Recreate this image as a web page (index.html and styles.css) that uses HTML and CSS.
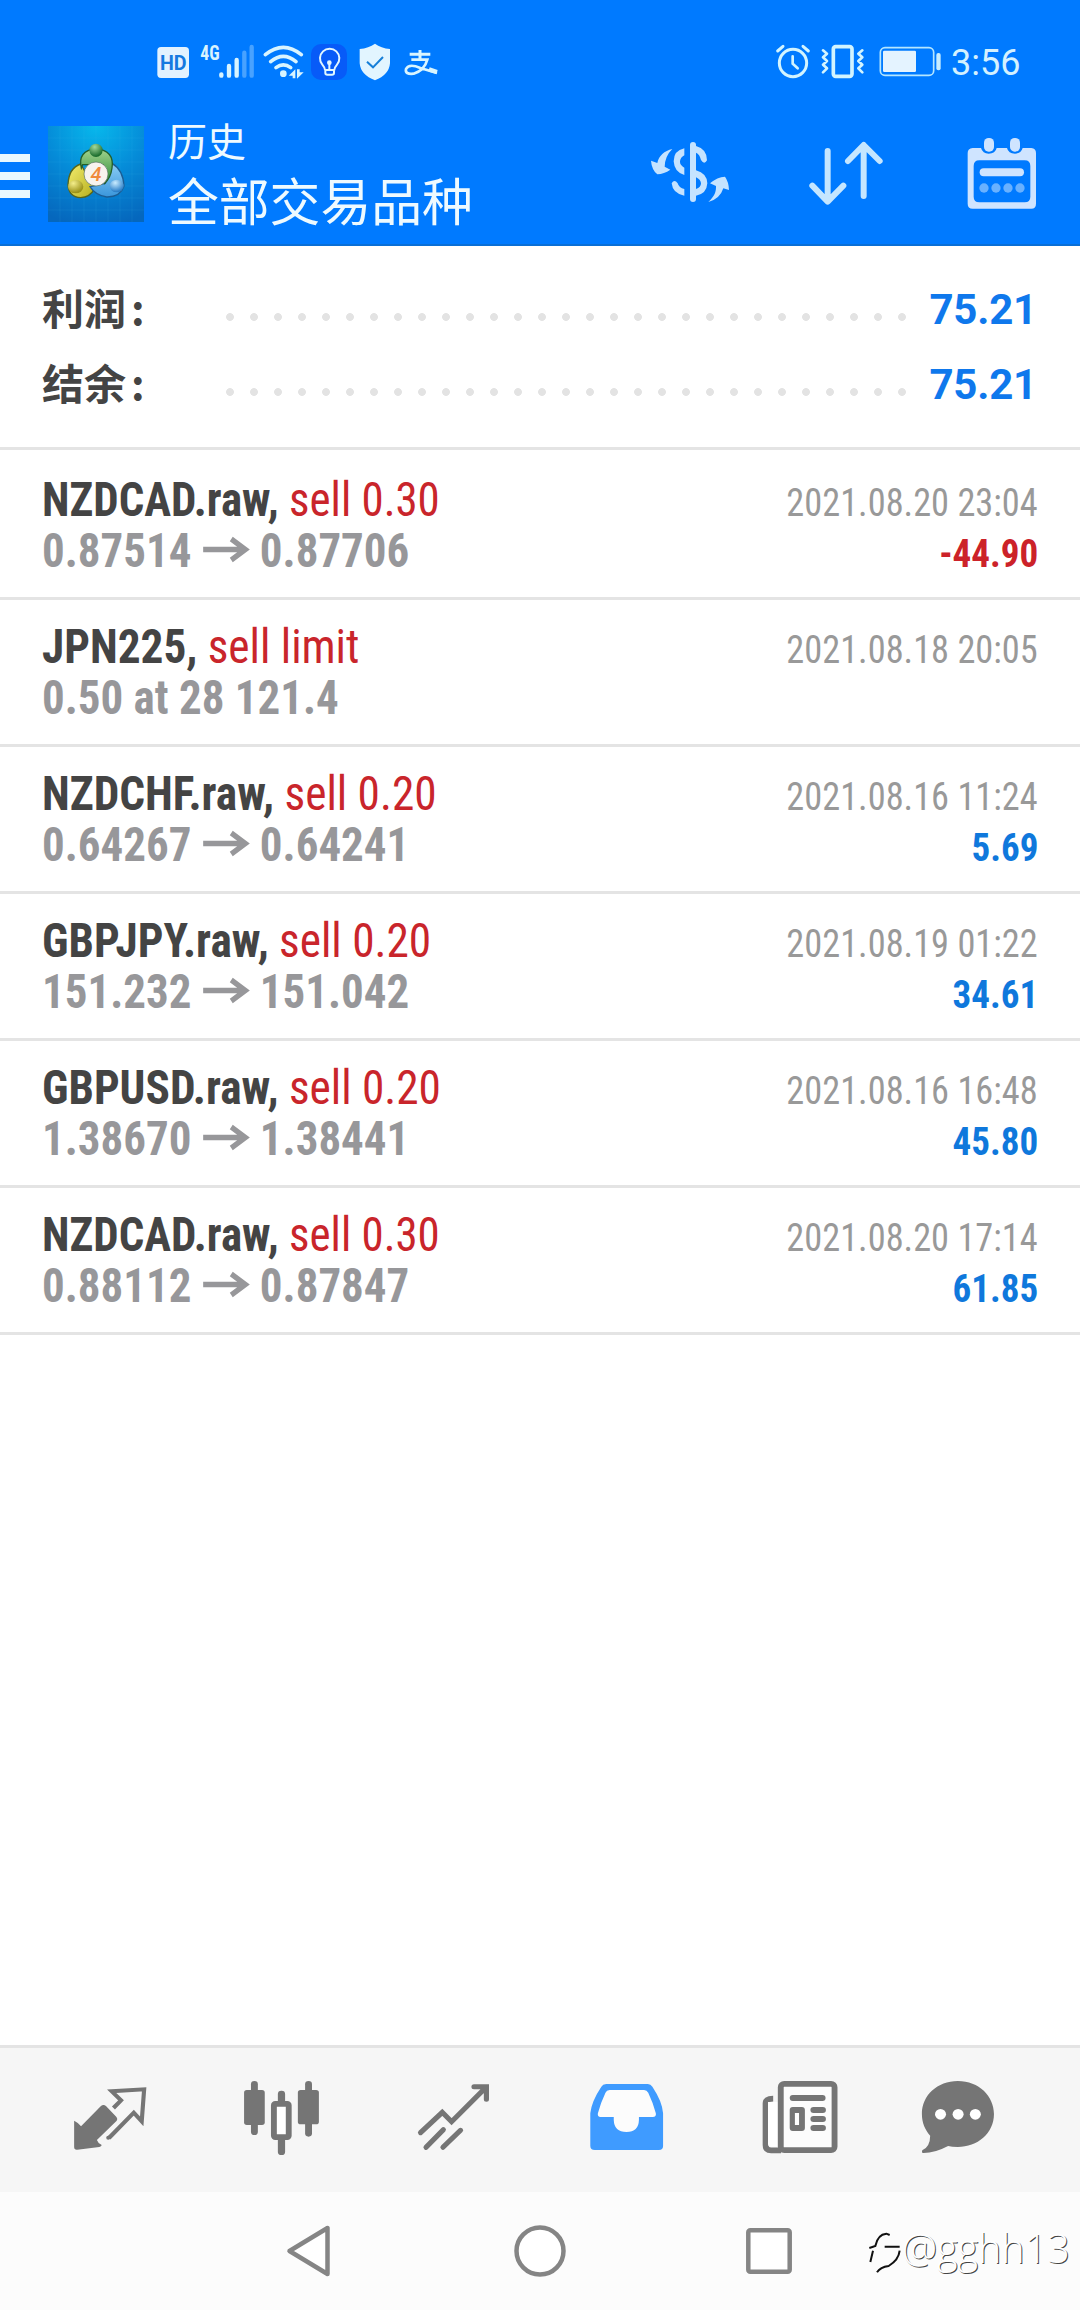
FILE: index.html
```html
<!DOCTYPE html>
<html lang="zh-CN">
<head>
<meta charset="utf-8">
<title>历史</title>
<link rel="stylesheet" href="styles.css">
</head>
<body>
<div class="screen">
  <header class="top">
    <div class="status">
      <svg class="hd" width="33" height="44" viewBox="52 30 99 132"><rect x="53" y="51" width="95" height="93" rx="11" fill="#e2f2ff"/><text x="101" y="119" class="hd-text" text-anchor="middle" textLength="80" lengthAdjust="spacingAndGlyphs">HD</text></svg>
      <svg class="signal" width="55" height="44" viewBox="180 30 165 132"><text x="181" y="90" class="net-text" textLength="58" lengthAdjust="spacingAndGlyphs">4G</text><g stroke-width="13" stroke-linecap="round" stroke="#d8f4ff"><path d="M244 133v4M267 108v29M290 90v47"/><path d="M313 68v69M335 51v86" stroke="#48a2ff"/></g></svg>
      <svg class="wifi" width="41" height="44" viewBox="369 30 123 132"><g fill="none" stroke="#d8f4ff" stroke-width="11" stroke-linecap="round"><path d="M376 74Q430 30 484 74M392 95Q430 63 468 95M408 113Q430 96 452 113"/></g><circle cx="430" cy="131" r="10" fill="#d8f4ff"/><path d="M466 118v27h-8v-8h-12zM471 118h8v9h12l-20 19z" fill="#d8f4ff"/></svg>
      <svg class="bulb" width="36" height="44" viewBox="513 30 108 132"><rect x="513" y="42" width="108" height="108" rx="30" fill="#075bf8"/><g fill="none" stroke="#e2f7ff" stroke-width="6" stroke-linecap="round" stroke-linejoin="round"><path d="M555 120Q554 112 547 104A29 29 0 1 1 591 104Q584 112 583 120ZM556 123v6q0 5 6 5h14q6 0 6-5v-6M568 102v16"/></g><circle cx="568" cy="98" r="7" fill="#e2f7ff"/></svg>
      <svg class="shield" width="32" height="44" viewBox="656 30 96 132"><path d="M704 41Q722 54 749 57V100Q746 135 704 151Q661 135 658 100V57Q685 54 704 41Z" fill="#e2f5ff"/><path d="M680 95l18 17 30-31" fill="none" stroke="#167fd8" stroke-width="6"/></svg>
      <svg class="pay" width="34" height="44" viewBox="791 30 102 132"><g fill="none" stroke="#d8f5ff"><path d="M808 73h62M839 60v28" stroke-width="9"/><path d="M813 89h48Q852 122 820 131Q793 134 797 117Q806 99 840 114L890 129" stroke-width="8"/><path d="M866 118l24 8" stroke-width="13"/></g></svg>
      <svg class="alarm" width="36" height="44" viewBox="50 30 108 132"><g fill="none" stroke="#d2f4ff" stroke-linecap="round"><circle cx="101" cy="99" r="41" stroke-width="9"/><path d="M55 63l16-14M147 63l-16-14" stroke-width="9"/><path d="M100 79v22l15 14" stroke-width="8"/></g></svg>
      <svg class="vibrate" width="44" height="44" viewBox="184 30 132 132"><g fill="none" stroke="#d2f4ff" stroke-linejoin="round" stroke-linecap="round"><rect x="221" y="50" width="56" height="89" rx="7" stroke-width="11"/><path d="M190 61l12 10-12 11 12 11-12 11 12 11-12 12M308 61l-12 10 12 11-12 11 12 11-12 11 12 12" stroke-width="8"/></g></svg>
      <svg class="battery" width="63" height="44" viewBox="357 30 189 132"><rect x="361" y="53" width="160" height="83" rx="14" fill="none" stroke="#b4e6ff" stroke-width="5"/><rect x="369" y="62" width="99" height="64" rx="4" fill="#e4f3ff"/><rect x="529" y="69" width="13" height="52" rx="6" fill="#c8edff"/></svg>
      <span class="time">3:56</span>
    </div>
    <div class="appbar">
      <div class="menu"><i></i><i></i><i></i></div>
      <svg class="logo" width="96" height="96" viewBox="24 24 288 288">
        <defs>
          <radialGradient id="bg" cx=".5" cy="0" r="1.05"><stop offset="0" stop-color="#07b8ec"/><stop offset=".5" stop-color="#058bd8"/><stop offset="1" stop-color="#0567bd"/></radialGradient>
          <linearGradient id="gr" x2="0" y2="1"><stop stop-color="#a5d48e"/><stop offset="1" stop-color="#278a38"/></linearGradient>
          <linearGradient id="ye" x2="1" y2="1"><stop stop-color="#f4ee70"/><stop offset="1" stop-color="#b5ad1c"/></linearGradient>
          <linearGradient id="bl" x2="0" y2="1"><stop stop-color="#8bcdf6"/><stop offset="1" stop-color="#3a96db"/></linearGradient>
          <radialGradient id="hg" cx=".4" cy=".25" r=".7"><stop stop-color="#a5d99b"/><stop offset="1" stop-color="#1b6d2d"/></radialGradient>
          <radialGradient id="hy" cx=".35" cy=".25" r=".7"><stop stop-color="#f4ee8b"/><stop offset="1" stop-color="#9d941a"/></radialGradient>
          <radialGradient id="hb" cx=".4" cy=".25" r=".7"><stop stop-color="#c9ecff"/><stop offset="1" stop-color="#2b7fc8"/></radialGradient>
        </defs>
        <path fill="url(#bg)" d="M24 24h288v288H24z"/>
        <path d="M60 24v288M96 24v288M132 24v288M168 24v288M204 24v288M240 24v288M276 24v288M24 60h288M24 96h288M24 132h288M24 168h288M24 204h288M24 240h288M24 276h288" stroke="#4fc0f0" stroke-opacity=".18" stroke-width="2"/>
        <path d="M84 200Q86 150 122 138L164 212Q150 238 122 239Q86 236 84 200Z" fill="url(#ye)" stroke="#56651c" stroke-width="4"/>
        <path d="M216 136Q250 156 252 205Q240 238 200 237Q166 232 150 206L196 196Z" fill="url(#bl)" stroke="#1b5d94" stroke-width="4"/>
        <path d="M124 150Q112 98 168 92Q224 98 216 150Q212 180 194 196L190 140H128Z" fill="url(#gr)" stroke="#245f2b" stroke-width="4"/>
        <circle cx="168" cy="97" r="20" fill="url(#hg)"/><ellipse cx="107" cy="206" rx="23" ry="20" fill="url(#hy)"/><ellipse cx="230" cy="204" rx="21" ry="19" fill="url(#hb)"/>
        <circle cx="168" cy="168" r="36" fill="#f7f3ee" stroke="#55705c" stroke-width="2"/>
        <text x="168" y="189" class="logo-text" text-anchor="middle">4</text>
      </svg>
      <div class="titles"><div class="title">历史</div><div class="subtitle">全部交易品种</div></div>
      <svg class="deals" width="80" height="70" viewBox="60 45 240 210" fill="#c5e3ff"><path d="M127 87C103 92 86 108 82 129L63 122Q65 149 82 163Q102 162 121 149L104 140Q105 108 127 87ZM235 246C258 225 258 210 258 198L240 190Q262 171 285 170Q296 185 297 210L280 205Q270 237 235 246Z"/><rect x="180" y="66" width="18" height="180" rx="9"/><path d="M163 85Q131 92 131 124Q133 157 163 165V143Q149 136 150 124Q151 112 163 106ZM198 78Q231 87 231 121Q223 136 213 120Q209 102 198 98ZM125 190Q133 176 143 190Q147 204 163 207V227Q128 221 125 190ZM198 151Q231 160 232 190Q230 222 198 227V207Q213 202 213 190Q212 178 198 172Z"/></svg>
      <svg class="sort" width="76" height="70" viewBox="535 45 228 210" fill="none" stroke="#c5e6ff" stroke-width="18" stroke-linecap="round" stroke-linejoin="round"><path d="M594 93V244M548 197L594 245L641 197M702 228V76M655 123L702 75L750 123"/></svg>
      <svg class="calendar" width="70" height="72" viewBox="1011 50 210 216"><path fill="#cfe4ff" fill-rule="evenodd" d="M1028 83H1053Q1058 100 1076 100Q1096 100 1100 83H1131Q1135 100 1155 100Q1173 100 1178 83H1204Q1218 84 1218 98V250Q1218 265 1204 265H1028Q1013 265 1013 250V98Q1013 84 1028 83ZM1048 120Q1031 120 1031 137V229Q1031 246 1048 246H1184Q1201 246 1201 229V137Q1201 120 1184 120Z"/><g fill="#cfe4ff"><rect x="1062" y="53" width="30" height="41" rx="14"/><rect x="1140" y="53" width="30" height="41" rx="14"/><rect x="1049" y="144" width="133" height="24" rx="12"/></g><g fill="#69b1ff"><circle cx="1062" cy="203" r="14"/><circle cx="1098" cy="203" r="14"/><circle cx="1134" cy="203" r="14"/><circle cx="1170" cy="203" r="14"/></g></svg>
    </div>
  </header>

  <section class="summary">
    <div class="sum-row"><span class="sum-label">利润<i class="colon">:</i></span><span class="dots"></span><span class="sum-value">75.21</span></div>
    <div class="sum-row"><span class="sum-label">结余<i class="colon">:</i></span><span class="dots"></span><span class="sum-value">75.21</span></div>
  </section>

  <main class="deals-list">
    <div class="deal first"><div class="line"><span class="name tight"><b>NZDCAD.raw,</b> <em>sell 0.30</em></span><span class="date">2021.08.20 23:04</span></div><div class="line"><span class="price">0.87514<svg class="arrow" viewBox="0 0 49 26"><path d="M0 12.500H45M30 2L45 12.500L30 23"/></svg>0.87706</span><span class="result loss">-44.90</span></div></div>
    <div class="deal"><div class="line"><span class="name"><b>JPN225,</b> <em>sell limit</em></span><span class="date">2021.08.18 20:05</span></div><div class="line"><span class="price">0.50 at 28 121.4</span></div></div>
    <div class="deal"><div class="line"><span class="name"><b>NZDCHF.raw,</b> <em>sell 0.20</em></span><span class="date">2021.08.16 11:24</span></div><div class="line"><span class="price">0.64267<svg class="arrow" viewBox="0 0 49 26"><path d="M0 12.500H45M30 2L45 12.500L30 23"/></svg>0.64241</span><span class="result">5.69</span></div></div>
    <div class="deal"><div class="line"><span class="name"><b>GBPJPY.raw,</b> <em>sell 0.20</em></span><span class="date">2021.08.19 01:22</span></div><div class="line"><span class="price">151.232<svg class="arrow" viewBox="0 0 49 26"><path d="M0 12.500H45M30 2L45 12.500L30 23"/></svg>151.042</span><span class="result">34.61</span></div></div>
    <div class="deal"><div class="line"><span class="name"><b>GBPUSD.raw,</b> <em>sell 0.20</em></span><span class="date">2021.08.16 16:48</span></div><div class="line"><span class="price">1.38670<svg class="arrow" viewBox="0 0 49 26"><path d="M0 12.500H45M30 2L45 12.500L30 23"/></svg>1.38441</span><span class="result">45.80</span></div></div>
    <div class="deal"><div class="line"><span class="name tight"><b>NZDCAD.raw,</b> <em>sell 0.30</em></span><span class="date">2021.08.20 17:14</span></div><div class="line"><span class="price">0.88112<svg class="arrow" viewBox="0 0 49 26"><path d="M0 12.500H45M30 2L45 12.500L30 23"/></svg>0.87847</span><span class="result">61.85</span></div></div>
  </main>

  <nav class="tabs">
    <svg class="tab" preserveAspectRatio="none" viewBox="203 150 232 228"><path fill="#757575" d="M215 272Q226 277 235 289L292 229Q300 221 308 229L337 260Q343 267 337 274L281 330Q284 340 295 345Q294 350 288 351L224 359Q215 360 215 351Z"/><path d="M329 234L351 211L324 184L418 178L411 274L388 248L316 324" fill="none" stroke="#757575" stroke-width="12"/><circle cx="314" cy="323" r="6" fill="#757575"/></svg>
    <svg class="tab" preserveAspectRatio="none" viewBox="703 150 232 228" fill="#757575"><rect x="729" y="153" width="20" height="162" rx="10"/><rect x="709" y="180" width="60" height="105" rx="8"/><rect x="886" y="153" width="20" height="167" rx="10"/><rect x="865" y="180" width="61" height="103" rx="8"/><rect x="807" y="182" width="21" height="60" rx="10"/><rect x="807" y="310" width="21" height="65" rx="10"/><rect x="795.500" y="221.500" width="43" height="100" rx="4" fill="#fff" stroke="#757575" stroke-width="17"/></svg>
    <svg class="tab" preserveAspectRatio="none" viewBox="1202 150 232 228" fill="none" stroke="#757575" stroke-width="15" stroke-linecap="round"><path d="M1221 308L1284 247L1311 275L1411 172M1376 170H1412V208M1237 352L1287 299M1286 352L1337 301" /></svg>
    <svg class="tab" preserveAspectRatio="none" viewBox="133.500 150 232 228"><path fill="#3f9bff" d="M192 162H313Q321 162 326 170Q355 215 357 250V348Q357 360 345 360H159Q146 360 146 348V250Q149 215 178 170Q182 162 192 162Z"/><path fill="#fcfcfc" d="M202 180H302Q310 180 314 188Q328 218 336 250Q338 261 327 261H287V270Q286 306 251 306Q215 306 214 270V261H176Q166 261 168 250Q176 218 190 188Q193 180 202 180Z"/></svg>
    <svg class="tab" preserveAspectRatio="none" viewBox="633 150 232 228"><path d="M690 206H677Q655 206 655 220V345Q655 361 671 361H700" fill="none" stroke="#757575" stroke-width="17"/><path fill="#fff" d="M662 216h28v134h-19q-9 0-9-9z"/><path d="M677 190h16v26h-16z" fill="#f6f6f6"/><rect x="699" y="161.500" width="156" height="199" rx="10" fill="#fcfcfc" stroke="#757575" stroke-width="17"/><g fill="#757575"><rect x="725" y="195" width="104" height="18" rx="9"/><rect x="725" y="231" width="44" height="72" rx="9"/><rect x="785" y="231" width="45" height="18" rx="9"/><rect x="785" y="258" width="45" height="18" rx="9"/><rect x="785" y="285" width="45" height="18" rx="9"/></g><path fill="#fff" d="M740 249h12v36h-12z"/></svg>
    <svg class="tab" preserveAspectRatio="none" viewBox="1132.500 150 232 228"><path fill="#757575" d="M1213 153C1275 153 1318 199 1318 252C1318 310 1270 351 1213 351Q1196 351 1185 348Q1145 370 1111 369Q1108 367 1110 361Q1133 350 1133 317C1118 300 1109 278 1109 252C1109 196 1154 153 1213 153Z"/><g fill="#fff"><circle cx="1163" cy="253" r="16"/><circle cx="1214" cy="253" r="16"/><circle cx="1264" cy="253" r="16"/></g></svg>
  </nav>

  <footer class="sysnav">
    <svg width="43" height="52" viewBox="0 0 43 52"><path d="M2.500 26L40.500 3V49Z"/></svg>
    <svg width="52" height="52" viewBox="0 0 52 52"><circle cx="26" cy="26" r="23.500"/></svg>
    <svg width="46" height="52" viewBox="0 0 46 52"><rect x="2.300" y="5.300" width="41.400" height="41.400" rx="2"/></svg>
    <div class="watermark">
      <svg width="36" height="48" viewBox="50 90 108 144"><path d="M57 144L75 138Q82 103 108 101L118 105M103 140H148M68 152L60 186M148 152Q145 180 115 198Q90 201 80 217"/></svg><span>@gghh13</span>
    </div>
  </footer>
</div>
</body>
</html>
```
FILE: styles.css
```css
* { box-sizing: border-box; }
body { margin: 0; background: #fff; font-family: Roboto, "Noto Sans CJK SC", sans-serif; }
svg { display: block; flex: none; overflow: visible; }
.screen { width: 1080px; height: 2310px; display: flex; flex-direction: column; background: #fff; overflow: hidden; }

.top { height: 246px; background: #007aff; border-bottom: 2px solid #0a6fd6; flex: none; }
.status { height: 84px; padding: 40px 0 0 157px; display: flex; align-items: flex-start; }
.signal { margin-left: 10px; }
.wifi { margin-left: 8px; }
.bulb { margin-left: 7px; }
.shield { margin-left: 12px; }
.pay { margin-left: 13px; }
.alarm { margin-left: 338px; }
.vibrate { margin-left: 9px; }
.battery { margin-left: 14px; }
.time { margin-left: 9px; font-size: 36px; line-height: 46px; color: #d4f1ff; }
.hd-text { font: 700 58px Roboto, sans-serif; fill: #1479e0; }
.net-text { font: 700 60px "Roboto Condensed", Roboto, sans-serif; fill: #d8f4ff; }
.logo-text { font: italic 500 60px Roboto, sans-serif; fill: #f08a3c; }

.appbar { height: 160px; display: flex; align-items: flex-start; color: #eefaff; }
.menu { width: 30px; margin-top: 70px; display: flex; flex-direction: column; gap: 10px; }
.menu i { height: 8px; background: #e9f8ff; }
.logo { margin: 42px 0 0 18px; }
.titles { width: 320px; margin-left: 24px; padding-top: 28px; font-family: "Noto Sans CJK SC", sans-serif; white-space: nowrap; }
.title { font-size: 39px; line-height: 54px; }
.subtitle { font-size: 50.800px; line-height: 66px; }
.deals { margin: 51px 0 0 162px; }
.sort { margin: 51px 0 0 78px; }
.calendar { margin: 53px 0 0 83px; }

.summary { height: 204px; padding: 26px 42px 0; border-bottom: 3px solid #e4e4e4; flex: none; }
.sum-row { height: 75px; display: flex; align-items: center; }
.sum-label { width: 182px; font: 700 42px/72px "Noto Sans CJK SC", sans-serif; color: #444; display: flex; padding-bottom: 5px; }
.colon { font-style: normal; margin-left: 5px; }
.dots { width: 696px; height: 8px; margin-top: 15px; background: radial-gradient(circle at 6px 4px, #e3e3e3 3.500px, transparent 4.300px) 0 0 / 24px 8px repeat-x; }
.sum-value { flex: 1; text-align: right; padding-right: 1px; font-size: 42px; line-height: 75px; font-weight: 700; letter-spacing: -.2px; color: #0f78ec; }

.deals-list { flex: 1; font-family: "Roboto Condensed", Roboto, sans-serif; }
.deal { height: 147px; padding: 21px 42px 0; border-bottom: 3px solid #e4e4e4; }
.first { height: 150px; padding-top: 24px; }
.line { display: flex; justify-content: space-between; align-items: baseline; height: 51px; line-height: 51px; white-space: nowrap; }
.name { font-size: 48px; color: #444; transform: scaleX(.943); transform-origin: left; }
.tight { transform: scaleX(.935); }
.name em { font-style: normal; color: #c9252b; }
.price { font-size: 48px; font-weight: 700; color: #97979a; transform: scaleX(.937); transform-origin: left; }
.arrow { display: inline-block; width: 49px; height: 26px; margin: 0 12px; fill: none; stroke: #97979a; stroke-width: 5.500px; vertical-align: 4px; }
.date { font-size: 39px; color: #999; transform: scaleX(.932); transform-origin: right; }
.result { font-size: 39px; font-weight: 700; color: #0f78dc; transform: scaleX(.95); transform-origin: right; }
.loss { color: #cc2229; }

.tabs { height: 147px; border-top: 3px solid #e4e4e4; background: #f6f6f6; padding: 32px 24px 0; display: grid; grid-template-columns: repeat(6, 172px); justify-items: center; flex: none; }
.tab { width: 80px; height: 76px; }

.sysnav { height: 118px; background: #fcfcfc; padding: 33px 0 0 287px; display: flex; align-items: flex-start; position: relative; flex: none; }
.sysnav > svg { fill: #fff; stroke: #858585; stroke-width: 4.500px; stroke-linejoin: round; }
.sysnav > svg + svg { margin-left: 184px; }
.sysnav > svg + svg + svg { margin-left: 180px; }
.watermark { position: absolute; left: 867px; top: 31px; display: flex; }
.watermark svg { margin-top: 7px; fill: none; stroke: #111; stroke-width: 6px; }
.watermark span { margin-left: -1px; font: 300 39.500px/50px "Open Sans", "Noto Sans", sans-serif; color: #fff; text-shadow: 1px 1px 0 #444; }
```
